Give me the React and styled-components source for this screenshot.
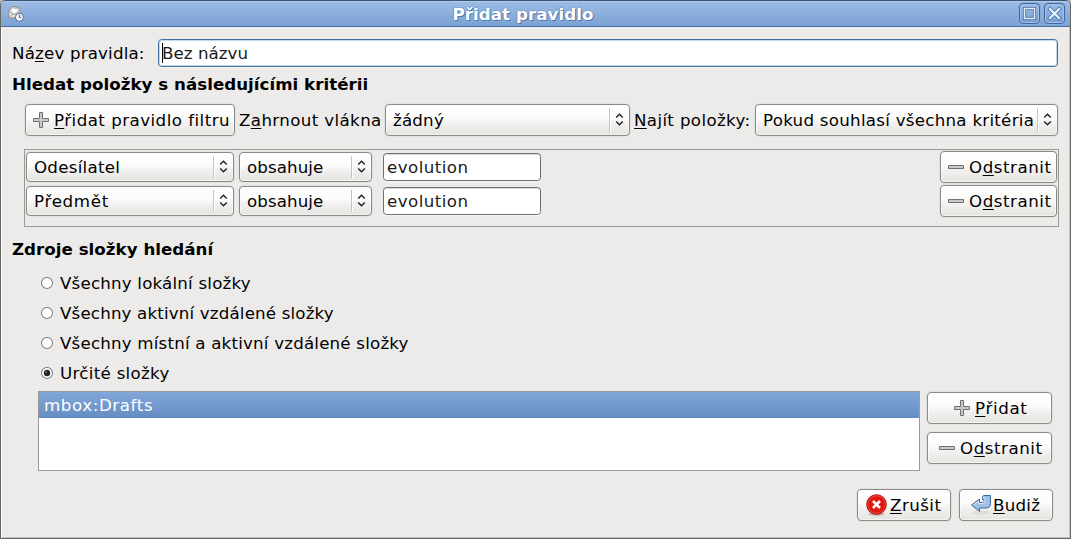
import React from "react";
import styled, { createGlobalStyle } from "styled-components";

const GlobalStyle = createGlobalStyle`
  html, body { margin: 0; padding: 0; background: #c4c1bb; overflow: hidden; }
  *, *::before, *::after { box-sizing: border-box; }
  button, input { font: inherit; color: inherit; letter-spacing: inherit; }
`;

const Dialog = styled.div`
  width: 1071px;
  height: 539px;
  display: flex;
  flex-direction: column;
  background: #edebe9;
  border: 1px solid #696765;
  border-top: 0;
  border-radius: 5px 5px 0 0;
  box-shadow: inset 1px 0 #fff, inset -1px -1px #c6c3bf;
  overflow: hidden;
  font: 16.67px/20px "DejaVu Sans", sans-serif;
  color: #000;
`;

const TitleBar = styled.header`
  height: 27px;
  flex: none;
  margin: 0 -1px;
  padding: 0 5px 0 6px;
  display: grid;
  grid-template-columns: 20px 1fr 46px;
  align-items: center;
  background: linear-gradient(#9dbce4, #7ba2d4);
  border: 1px solid #4570a8;
  border-top-color: #3d5378;
  border-radius: 5px 5px 0 0;
  box-shadow: inset 0 1px #b0caec;
`;

const Title = styled.h1`
  margin: 0;
  text-align: center;
  font-size: 16.67px;
  line-height: 20px;
  padding-top: 2px;
  letter-spacing: 0.05px;
  color: #fff;
  text-shadow: 1px 1px #4e79b1, -1px 0 #6b93c8, 0 -1px #7fa5d6;
`;

const WindowButtons = styled.div`
  display: flex;
  gap: 4px;
`;

const WindowButton = styled.button`
  width: 21px;
  height: 21px;
  padding: 0;
  display: block;
  border: 1px solid #41689f;
  border-radius: 4px;
  background: linear-gradient(#9dbce5, #749cd0);
  box-shadow: inset 0 0 0 1px #a2c0e7, 0 0 0 1px #8aaedb;
  svg { display: block; }
`;

const Content = styled.main`
  flex: 1;
  display: flex;
  flex-direction: column;
  padding: 12px 11px 0;
`;

const Label = styled.span`
  white-space: pre;
  padding-top: 1px;
  letter-spacing: ${(p) => p.$track || 0}px;
  u { text-decoration-thickness: 1px; text-underline-offset: 2px; text-decoration-skip-ink: none; }
`;

const NameRow = styled.label`
  display: flex;
  align-items: center;
  justify-content: space-between;
  padding-right: 1px;
`;

const Entry = styled.input`
  width: 158px;
  height: 28px;
  padding: 0 3px;
  outline: 0;
  color: #1a1a1a;
  border-radius: 3.5px;
  background: #fff;
  letter-spacing: 0.45px;
  border: 1px solid #72706d;
  box-shadow: inset 0 1px #d9d8d6, 0 1px #f6f5f4;
`;

const NameEntry = styled.div`
  width: 900px;
  height: 28px;
  padding: 3px 3px 0;
  display: flex;
  color: #1a1a1a;
  border: 1px solid #466fa6;
  border-radius: 3.5px;
  background: #fff;
  box-shadow: inset 0 0 0 1px #c3d6ec, 0 1px #f8f7f6;
`;

const Caret = styled.i`
  width: 1px;
  height: 20px;
  margin-right: -1px;
  background: #000;
`;

const Heading = styled.h2`
  margin: ${(p) => p.$top}px 0 0;
  font-size: 16.67px;
  line-height: 20px;
  letter-spacing: 0.03px;
`;

const OptionsRow = styled.div`
  display: grid;
  grid-template-columns: 210px 142px 245px 117px 303px;
  column-gap: 4px;
  align-items: center;
  margin: 9px 0 0 13px;
`;

const Button = styled.button`
  height: 32px;
  width: ${(p) => p.$width}px;
  padding: 0 0 0 ${(p) => p.$pad}px;
  display: flex;
  align-items: center;
  gap: ${(p) => p.$gap ?? 5}px;
  border: 1px solid #8b8986;
  border-radius: 4px;
  background: linear-gradient(#fff, #fbfbfa 45%, #f2f1f0 60%, #e6e4e1);
  box-shadow: inset 0 0 0 1px #ffffff90, 0 0 0 1px #e4e2df;
  svg { flex: none; display: block; }
`;

const Combo = styled.div`
  width: ${(p) => p.$width}px;
  height: ${(p) => p.$height || 30}px;
  padding: 0 5px 0 7px;
  display: flex;
  align-items: center;
  border: 1px solid #8b8986;
  border-radius: 4px;
  background: linear-gradient(#fff, #fbfbfa 45%, #f2f1f0 60%, #e6e4e1);
  box-shadow: inset 0 0 0 1px #ffffff90, 0 0 0 1px #e4e2df;
`;

const ComboArrows = styled.span`
  margin-left: auto;
  height: calc(100% - 6px);
  width: 15px;
  flex: none;
  display: flex;
  align-items: center;
  justify-content: flex-end;
  border-left: 1px solid #c5c3c0;
  box-shadow: inset 1px 0 #fff;
  svg { margin-bottom: 1px; }
`;

const RuleFrame = styled.section`
  width: 1035px;
  height: 78px;
  margin: 13px 0 0 12px;
  padding: 1px 1px 0;
  display: flex;
  flex-direction: column;
  gap: 2px;
  border: 1px solid #9c9a97;
`;

const RuleRow = styled.div`
  height: 32px;
  display: grid;
  grid-template-columns: 208px 133px 164px 1fr;
  column-gap: 5px;
  align-items: center;
  ${Entry} { margin-left: 6px; }
  ${Button} { justify-self: end; }
`;

const RadioList = styled.div`
  margin: 8px 0 0 29px;
  display: flex;
  flex-direction: column;
`;

const RadioRow = styled.label`
  height: 30px;
  display: flex;
  align-items: center;
  gap: 6px;
`;

const Sources = styled.div`
  display: flex;
  gap: 7px;
  margin: 3px 0 0 26px;
`;

const FolderList = styled.div`
  width: 882px;
  height: 80px;
  border: 1px solid #9c9a97;
  background: #fff;
`;

const Folder = styled.div`
  height: 26px;
  padding: 4px 5px 2px;
  color: #fff;
  background: linear-gradient(#82a7d9, #648dc4);
`;

const ListButtons = styled.div`
  padding-top: 1px;
  display: flex;
  flex-direction: column;
  gap: 8px;
`;

const Actions = styled.footer`
  display: flex;
  justify-content: flex-end;
  gap: 8px;
  margin: 18px 6px 0 0;
`;

const MailIcon = () => (
  <svg width="18" height="18" viewBox="0 0 18 18">
    <path d="M1.500 6.500 5 1.500l6.500 1 1.500 3.500-.5 6.500-10.500.5z" fill="#e9e7e2" stroke="#8f8c86" />
    <path d="M3.500 5.500 5.500 3l5 .7 1 2.800-4.500 2.800z" fill="#fff" stroke="#bab7b0" strokeWidth=".8" />
    <path d="m2 6.500 5 3.200 5.500-3.200M2.200 12.500 5.500 9" fill="none" stroke="#a19e97" strokeWidth=".9" />
    <circle cx="12.400" cy="12.300" r="4" fill="#f7f9fc" stroke="#4d6c9c" />
    <path d="M12.400 9.800v2.700h1.800" fill="none" stroke="#55585c" />
  </svg>
);

const MaximizeIcon = () => (
  <svg width="19" height="19">
    <rect x="4.500" y="4.500" width="10" height="10" fill="none" stroke="#4a73ab" strokeWidth="3" />
    <rect x="4.500" y="4.500" width="10" height="10" fill="none" stroke="#e6eefa" strokeWidth="1.400" />
  </svg>
);

const CloseIcon = () => (
  <svg width="19" height="19" strokeLinecap="square">
    <path d="m5 5 9 9m0-9-9 9" stroke="#4a73ab" strokeWidth="3.800" />
    <path d="m5 5 9 9m0-9-9 9" stroke="#edf3fb" strokeWidth="2.200" />
  </svg>
);

const PlusIcon = () => (
  <svg width="16" height="16">
    <path d="M6.500.5h3v6h6v3h-6v6h-3v-6h-6v-3h6z" fill="#c9c9c7" stroke="#70706e" />
  </svg>
);

const MinusIcon = () => (
  <svg width="16" height="16">
    <path d="M.5 6.500h15v3H.5z" fill="#c9c9c7" stroke="#70706e" />
  </svg>
);

const ArrowsIcon = () => (
  <svg width="9" height="13" fill="none" stroke="#1c1c1c" strokeWidth="1.300">
    <path d="M1.200 4.500 4.500 1.200l3.300 3.300M1.200 8.500l3.300 3.300 3.300-3.300" />
  </svg>
);

const CancelIcon = () => (
  <svg width="22" height="22">
    <ellipse cx="11.500" cy="20" rx="8" ry="1.800" fill="#bdbab5" />
    <circle cx="11.500" cy="10.500" r="9.800" fill="#df1710" stroke="#a80a08" />
    <circle cx="11.500" cy="10.500" r="8.800" fill="none" stroke="#f0564a" strokeWidth=".8" />
    <path d="m8 7 7 7m0-7-7 7" stroke="#fff" strokeWidth="2.600" />
  </svg>
);

const OkIcon = () => (
  <svg width="22" height="22">
    <ellipse cx="11" cy="18.500" rx="9" ry="2" fill="#dedcd8" />
    <path
      d="M1.500 11 9.500 5v3.500h3c1 0 1.500-.5 1.500-1.500V5.500h-1.500v-3l1.500-1h6.500v8c0 3.200-1.500 4.500-4.500 4.500H9.500v3.500z"
      fill="#9dc0e6"
      stroke="#3d6a9f"
      strokeLinejoin="round"
    />
    <path d="m3.200 11 5.300-4v2.500h4.500c1.700 0 2-1 2-2.500V4.500h-1.500V2.800" fill="none" stroke="#d9e7f6" />
  </svg>
);

const RadioMark = ({ checked }) => (
  <svg width="13" height="13">
    <circle cx="6" cy="6" r="5.500" fill="#fff" stroke="#858380" strokeWidth="1.100" />
    {checked && <circle cx="6" cy="6" r="3.200" fill="#252525" />}
    {checked && <circle cx="5" cy="5" r=".9" fill="#777" />}
  </svg>
);

const Select = ({ width, height, track, children }) => (
  <Combo $width={width} $height={height}>
    <Label $track={track}>{children}</Label>
    <ComboArrows>
      <ArrowsIcon />
    </ComboArrows>
  </Combo>
);

const RemoveButton = ({ width, pad }) => (
  <Button $width={width} $pad={pad}>
    <MinusIcon />
    <Label $track={0.55}>O<u>d</u>stranit</Label>
  </Button>
);

const rules = [
  { field: "Odesílatel", track: 0.26 },
  { field: "Předmět", track: 0.7 },
];

const sources = [
  { text: "Všechny lokální složky", track: 0.2 },
  { text: "Všechny aktivní vzdálené složky", track: 0.17 },
  { text: "Všechny místní a aktivní vzdálené složky", track: 0.2 },
  { text: "Určité složky", track: 0.3, checked: true },
];

export default function App() {
  return (
    <>
      <GlobalStyle />
      <Dialog>
        <TitleBar>
          <MailIcon />
          <Title>Přidat pravidlo</Title>
          <WindowButtons>
            <WindowButton><MaximizeIcon /></WindowButton>
            <WindowButton><CloseIcon /></WindowButton>
          </WindowButtons>
        </TitleBar>
        <Content>
          <NameRow>
            <Label $track={0.18}>Ná<u>z</u>ev pravidla:</Label>
            <NameEntry>
              <Caret />
              <Label $track={0.05}>Bez názvu</Label>
            </NameEntry>
          </NameRow>
          <Heading $top={8}>Hledat položky s následujícími kritérii</Heading>
          <OptionsRow>
            <Button $width={210} $pad={7}>
              <PlusIcon />
              <Label $track={0.47}><u>P</u>řidat pravidlo filtru</Label>
            </Button>
            <Label $track={0.38}>Z<u>a</u>hrnout vlákna</Label>
            <Select width={245} height={32} track={0.2}>žádný</Select>
            <Label $track={0.36}><u>N</u>ajít položky:</Label>
            <Select width={303} height={32} track={0.27}>Pokud souhlasí všechna kritéria</Select>
          </OptionsRow>
          <RuleFrame>
            {rules.map((r) => (
              <RuleRow key={r.field}>
                <Select width={208} track={r.track}>{r.field}</Select>
                <Select width={133} track={0.1}>obsahuje</Select>
                <Entry defaultValue="evolution" />
                <RemoveButton width={117} pad={7} />
              </RuleRow>
            ))}
          </RuleFrame>
          <Heading $top={13}>Zdroje složky hledání</Heading>
          <RadioList>
            {sources.map((s) => (
              <RadioRow key={s.text}>
                <RadioMark checked={s.checked} />
                <Label $track={s.track}>{s.text}</Label>
              </RadioRow>
            ))}
          </RadioList>
          <Sources>
            <FolderList>
              <Folder><Label $track={0.6}>mbox:Drafts</Label></Folder>
            </FolderList>
            <ListButtons>
              <Button $width={125} $pad={26}>
                <PlusIcon />
                <Label $track={0.67}><u>P</u>řidat</Label>
              </Button>
              <RemoveButton width={125} pad={11} />
            </ListButtons>
          </Sources>
          <Actions>
            <Button $width={94} $pad={7} $gap={3}>
              <CancelIcon />
              <Label $track={0.45}><u>Z</u>rušit</Label>
            </Button>
            <Button $width={94} $pad={10} $gap={1}>
              <OkIcon />
              <Label $track={0.25}><u>B</u>udiž</Label>
            </Button>
          </Actions>
        </Content>
      </Dialog>
    </>
  );
}
